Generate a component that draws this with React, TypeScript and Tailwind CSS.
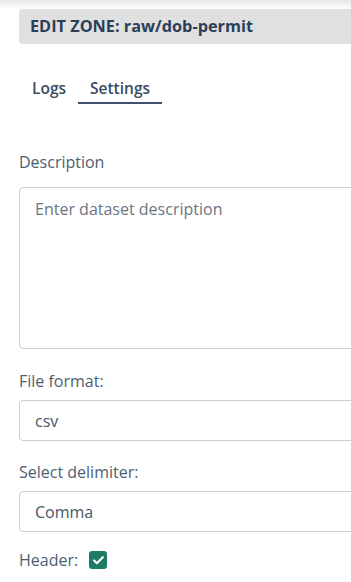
import { Check } from 'lucide-react'

const font = { fontFamily: '"Segoe UI", "Open Sans", "Noto Sans", sans-serif' }

const label = 'text-[16px] leading-[20px] text-[#4d5d73]'
const box = 'border border-[#cdcdcd] rounded-[4px] px-[15px] text-[16px]'
const tab = 'pb-[4px] text-[15.5px] leading-[20px] font-semibold text-[#3b4b62] border-b-2'

export default function App() {
  return (
    <div className="w-[351px] h-[582px] overflow-hidden bg-white" style={font}>
      <div className="h-[9px] bg-gradient-to-b from-[#e6e6e6] to-white" />
      <div className="w-[420px] pl-[19px]">
        {/* title bar */}
        <div className="h-[35px] bg-[#e0e0e0] rounded-[4px] pl-[11px] flex items-center">
          <span className="text-[16.3px] font-bold text-[#2c3e5a]">EDIT ZONE: raw/dob-permit</span>
        </div>

        {/* tabs */}
        <div className="mt-[34px] flex items-start">
          <div className={`${tab} pl-[13px] pr-[12px] border-transparent`}>Logs</div>
          <div className={`${tab} px-[12px] border-[#3e4f6a]`}>Settings</div>
        </div>

        <div className={`mt-[48px] ${label}`}>Description</div>
        <div className={`mt-[15px] h-[162px] ${box} pt-[9px] leading-[24px] text-[#6b7582]`}>
          Enter dataset description
        </div>

        <div className={`mt-[22px] ${label}`}>File format:</div>
        <div className={`mt-[9px] h-[41px] ${box} flex items-center text-[#4a5568]`}>csv</div>

        <div className={`mt-[21px] ${label}`}>Select delimiter:</div>
        <div className={`mt-[9px] h-[41px] ${box} flex items-center text-[#4a5568]`}>Comma</div>

        <div className="mt-[18px] h-[20px] flex items-center gap-[11px]">
          <span className={label}>Header:</span>
          <span className="w-[18px] h-[18px] rounded-[3px] bg-[#1d7a63] flex items-center justify-center">
            <Check size={13} strokeWidth={4} className="text-white" />
          </span>
        </div>
      </div>
    </div>
  )
}
